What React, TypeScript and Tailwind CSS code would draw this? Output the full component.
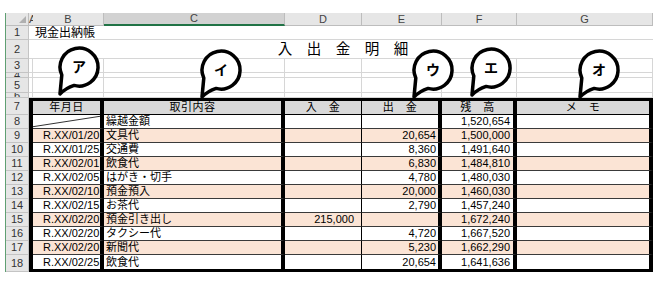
import React from "react";

const GRID = "grid grid-cols-[23px_4px_71px_181px_77px_80px_75px_136px]";
const FONT = { fontFamily: '"Liberation Sans", "Noto Sans CJK JP", sans-serif' };

type Entry = {
  n: number;
  date?: string;
  item: string;
  inc?: string;
  out?: string;
  bal: string;
  diag?: boolean;
};

const entries: Entry[] = [
  { n: 8, item: "繰越金額", bal: "1,520,654", diag: true },
  { n: 9, date: "R.XX/01/20", item: "文具代", out: "20,654", bal: "1,500,000" },
  { n: 10, date: "R.XX/01/25", item: "交通費", out: "8,360", bal: "1,491,640" },
  { n: 11, date: "R.XX/02/01", item: "飲食代", out: "6,830", bal: "1,484,810" },
  { n: 12, date: "R.XX/02/05", item: "はがき・切手", out: "4,780", bal: "1,480,030" },
  { n: 13, date: "R.XX/02/10", item: "預金預入", out: "20,000", bal: "1,460,030" },
  { n: 14, date: "R.XX/02/15", item: "お茶代", out: "2,790", bal: "1,457,240" },
  { n: 15, date: "R.XX/02/20", item: "預金引き出し", inc: "215,000", bal: "1,672,240" },
  { n: 16, date: "R.XX/02/20", item: "タクシー代", out: "4,720", bal: "1,667,520" },
  { n: 17, date: "R.XX/02/20", item: "新聞代", out: "5,230", bal: "1,662,290" },
  { n: 18, date: "R.XX/02/25", item: "飲食代", out: "20,654", bal: "1,641,636" },
];

function RowHead({ n }: { n: number | string }) {
  return (
    <div className="flex items-center justify-center overflow-hidden border-r border-b border-[#c4c4c4] bg-[#e6e6e6] text-[11px] leading-none text-[#333]">
      {n}
    </div>
  );
}

function Bubble({ x, y, label }: { x: string; y: string; label: string }) {
  return (
    <div className={`absolute ${x} ${y} h-[52px] w-[46px]`}>
      <svg width="46" height="52" viewBox="0 0 46 52" className="absolute inset-0 overflow-visible">
        <path
          d="M18.1 39.4 A19 19 0 1 0 5.8 29 L4 48 Q10 42 18.1 39.4 Z"
          fill="white"
          stroke="black"
          strokeWidth="3.5"
          strokeLinejoin="round"
        />
      </svg>
      <span className="absolute top-0 left-0 flex h-[42px] w-[46px] items-center justify-center text-[14px] font-bold text-black">
        {label}
      </span>
    </div>
  );
}

export default function App() {
  const plain = "border-r border-b border-[#d6d6d6]";
  return (
    <div className="relative h-[284px] w-[657px] overflow-hidden bg-white pt-[13px] pl-[5px] text-black" style={FONT}>
      <div className="border-l border-[#5f9f72]">
        {/* column letters */}
        <div className={`${GRID} h-[13px] text-[11px] leading-none text-[#444]`}>
          <div className="flex items-end justify-end border-r border-b border-[#bdbdbd] bg-[#e6e6e6] pr-[2px] pb-[2px]">
            <svg width="7" height="7" viewBox="0 0 7 7">
              <polygon points="7,0 7,7 0,7" fill="#b0b0b0" />
            </svg>
          </div>
          <div className="flex items-center overflow-visible border-b border-[#bdbdbd] bg-[#e6e6e6] whitespace-nowrap">A</div>
          <div className="flex items-center justify-center border-r border-b border-[#bdbdbd] bg-[#e6e6e6]">B</div>
          <div className="flex items-center justify-center border-r border-b-2 border-r-[#bdbdbd] border-b-[#217346] bg-[#d2d2d2]">C</div>
          <div className="flex items-center justify-center border-r border-b border-[#bdbdbd] bg-[#e6e6e6]">D</div>
          <div className="flex items-center justify-center border-r border-b border-[#bdbdbd] bg-[#e6e6e6]">E</div>
          <div className="flex items-center justify-center border-r border-b border-[#bdbdbd] bg-[#e6e6e6]">F</div>
          <div className="flex items-center justify-center border-r border-b border-[#bdbdbd] bg-[#e6e6e6]">G</div>
        </div>

        {/* row 1 */}
        <div className={`${GRID} h-[14px]`}>
          <RowHead n={1} />
          <div className="border-b border-[#d6d6d6]" />
          <div className="col-span-6 flex items-center border-b border-[#d6d6d6] pl-[2px] text-[12px] leading-none whitespace-nowrap">
            現金出納帳
          </div>
        </div>

        {/* row 2 */}
        <div className={`${GRID} h-[19px]`}>
          <RowHead n={2} />
          <div className="border-b border-[#d6d6d6]" />
          <div className="col-span-6 flex items-center justify-center border-b border-[#d6d6d6] text-[14.5px] leading-none">
            入　出　金　明　細
          </div>
        </div>

        {/* rows 3 - 6 */}
        {[
          { n: 3, h: "h-[14px]" },
          { n: 4, h: "h-[5px]" },
          { n: 5, h: "h-[15px]" },
          { n: 6, h: "h-[5px]" },
        ].map((r) => (
          <div key={r.n} className={`${GRID} ${r.h}`}>
            <RowHead n={r.n} />
            <div className={plain} />
            <div className={plain} />
            <div className={plain} />
            <div className={plain} />
            <div className={plain} />
            <div className={plain} />
            <div className={plain} />
          </div>
        ))}

        {/* row 7 header */}
        <div className={`${GRID} h-[17px] text-[11px] leading-none tracking-[0.5px]`}>
          <RowHead n={7} />
          <div className="bg-black" />
          <div className="flex items-center justify-center border-t-[3px] border-r-4 border-b border-black bg-[#d9d9d9]">年月日</div>
          <div className="flex items-center justify-center border-t-[3px] border-r-4 border-b border-black bg-[#d9d9d9]">取引内容</div>
          <div className="flex items-center justify-center border-t-[3px] border-r border-b border-black bg-[#d9d9d9]">入　金</div>
          <div className="flex items-center justify-center border-t-[3px] border-r-4 border-b border-black bg-[#d9d9d9]">出　金</div>
          <div className="flex items-center justify-center border-t-[3px] border-r-4 border-b border-black bg-[#d9d9d9]">残　高</div>
          <div className="flex items-center justify-center border-t-[3px] border-r-4 border-b border-black bg-[#d9d9d9]">メ　モ</div>
        </div>

        {/* rows 8 - 18 */}
        {entries.map((e) => {
          const last = e.n === 18;
          const fill = e.n % 2 === 1 ? "bg-[#fbe4d5]" : "bg-white";
          const bottom = last ? "border-b-[3px] border-b-black" : "border-b border-b-[#3a3a3a]";
          const cell = `flex items-center overflow-visible whitespace-nowrap ${fill} ${bottom}`;
          return (
            <div key={e.n} className={`${GRID} ${last ? "h-[17px]" : "h-[14px]"} text-[11px] leading-none`}>
              <RowHead n={e.n} />
              <div className="bg-black" />
              <div className={`${cell} relative border-r-4 border-r-black pl-[10px]`}>
                {e.diag ? (
                  <svg className="absolute inset-0 h-full w-full" preserveAspectRatio="none" viewBox="0 0 10 10">
                    <line x1="0" y1="9" x2="10" y2="1" stroke="#333" strokeWidth="1" vectorEffect="non-scaling-stroke" />
                  </svg>
                ) : (
                  e.date
                )}
              </div>
              <div className={`${cell} border-r-4 border-r-black pl-[2px]`}>{e.item}</div>
              <div className={`${cell} justify-end border-r border-r-black pr-[7px]`}>{e.inc}</div>
              <div className={`${cell} justify-end border-r-4 border-r-black pr-[2px]`}>{e.out}</div>
              <div className={`${cell} justify-end border-r-4 border-r-black pr-[3px]`}>{e.bal}</div>
              <div className={`${cell} border-r-4 border-r-black`} />
            </div>
          );
        })}
      </div>

      <Bubble x="left-[56px]" y="top-[46px]" label="ア" />
      <Bubble x="left-[198px]" y="top-[49px]" label="イ" />
      <Bubble x="left-[410px]" y="top-[49px]" label="ウ" />
      <Bubble x="left-[468px]" y="top-[47px]" label="エ" />
      <Bubble x="left-[576px]" y="top-[49px]" label="オ" />
    </div>
  );
}
